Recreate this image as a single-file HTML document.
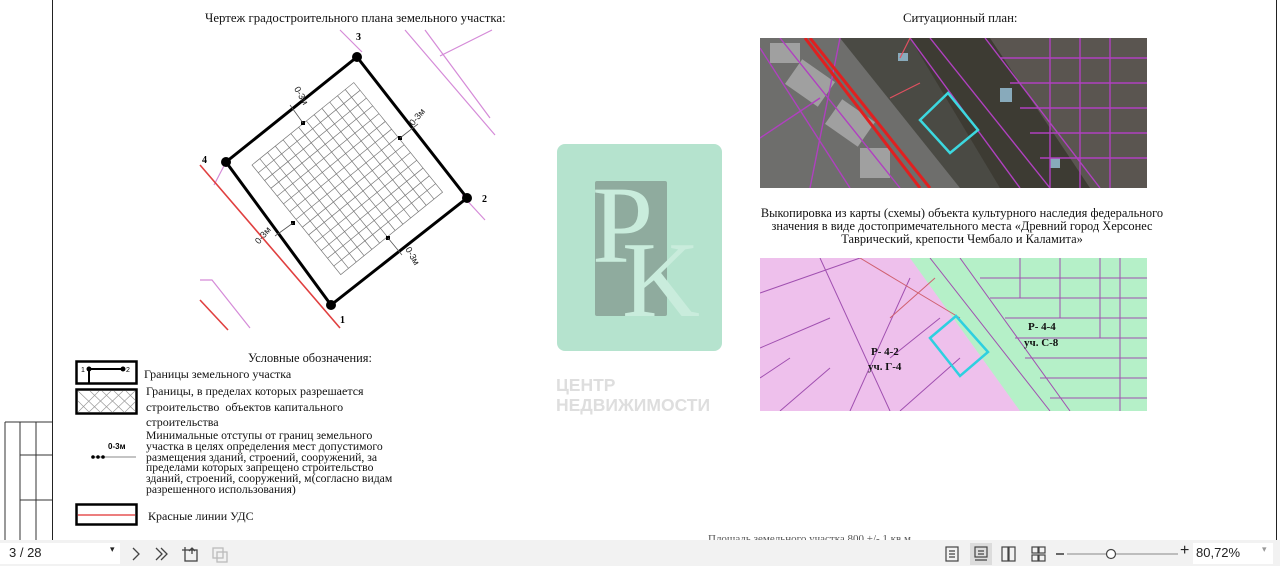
<!DOCTYPE html>
<html><head><meta charset="utf-8"><style>
*{margin:0;padding:0;box-sizing:border-box}
body{width:1280px;height:566px;overflow:hidden;background:#fff;position:relative;font-family:"Liberation Serif",serif;color:#111}
.t{position:absolute;font-size:12px;line-height:14px;white-space:nowrap}
.tb{position:absolute;left:0;top:540px;width:1280px;height:26px;background:#f2f2f2;font-family:"Liberation Sans",sans-serif;font-size:13px;color:#222}
</style></head><body>
<div style="position:absolute;left:52px;top:0;width:1px;height:540px;background:#222"></div>
<div style="position:absolute;left:1276px;top:0;width:1px;height:540px;background:#222"></div>
<svg style="position:absolute;left:0;top:0" width="60" height="540">
<g stroke="#333" stroke-width="1" fill="none">
<path d="M5 422H52M5 422V540M20 422V540M36 422V540M20 455H52M20 500H52"/>
</g></svg>

<div class="t" style="left:205px;top:11px;font-size:12.8px">Чертеж градостроительного плана земельного участка:</div>
<div class="t" style="left:903px;top:11px;font-size:12.8px">Ситуационный план:</div>

<svg style="position:absolute;left:190px;top:20px" width="330" height="320" viewBox="190 20 330 320">
<g stroke="#d58bd8" stroke-width="1.2" fill="none">
<path d="M340 30L362 52M405 30L495 135M425 30L490 118M440 56L492 30M462 195L485 220M200 280H212L250 328M214 185L226 162"/>
</g>
<g stroke="#e04040" stroke-width="1.6" fill="none"><path d="M200 165L340 328M200 300L228 330"/></g>
<g transform="translate(252,165) rotate(-39)">
<g stroke="#777" stroke-width="0.7">
<path d="M0 0H131V141H0Z" fill="none"/>
<path d="M10 0V141M20 0V141M30 0V141M40 0V141M50 0V141M60 0V141M70 0V141M80 0V141M90 0V141M100 0V141M110 0V141M120 0V141M0 10H131M0 20H131M0 30H131M0 40H131M0 50H131M0 60H131M0 70H131M0 80H131M0 90H131M0 100H131M0 110H131M0 120H131M0 130H131"/>
</g></g>
<path d="M357 57L467 198L331 305L226 162Z" fill="none" stroke="#000" stroke-width="3"/>
<g fill="#000"><circle cx="357" cy="57" r="5"/><circle cx="467" cy="198" r="5"/><circle cx="331" cy="305" r="5"/><circle cx="226" cy="162" r="5"/>
<rect x="301" y="121" width="4" height="4"/><rect x="398" y="136" width="4" height="4"/><rect x="291" y="221" width="4" height="4"/><rect x="386" y="236" width="4" height="4"/></g>
<g stroke="#555" stroke-width="0.8"><path d="M303 123L290 105M400 138L418 124M293 223L275 236M388 238L402 255"/></g>
<g font-family="Liberation Sans,sans-serif" font-size="9" fill="#222">
<text x="284" y="90" transform="rotate(60 290 98)">0-3м</text>
<text x="408" y="125" transform="rotate(-50 412 120)">0-3м</text>
<text x="255" y="240" transform="rotate(-50 262 238)">0-3м</text>
<text x="400" y="252" transform="rotate(60 405 255)">0-3м</text>
</g>
<g font-family="Liberation Serif,serif" font-weight="bold" font-size="10" fill="#000">
<text x="356" y="40">3</text><text x="482" y="202">2</text><text x="340" y="323">1</text><text x="202" y="163">4</text></g>
</svg>

<svg style="position:absolute;left:557px;top:144px" width="166" height="208" viewBox="557 144 166 208">
<rect x="557" y="144" width="165" height="207" rx="8" fill="#b5e3ce"/>
<rect x="595" y="181" width="72" height="135" rx="2" fill="#8fab9e"/>
<text x="592" y="262" font-family="Liberation Serif,serif" font-size="110" fill="#c9ecdc">P</text>
<text x="622" y="316" font-family="Liberation Serif,serif" font-size="108" fill="#c9ecdc">K</text>
</svg>
<div style="position:absolute;left:556px;top:375px;font:bold 17.5px 'Liberation Sans',sans-serif;color:#dedede;line-height:20px">ЦЕНТР<br>НЕДВИЖИМОСТИ</div>

<svg style="position:absolute;left:760px;top:38px" width="387" height="150" viewBox="0 0 387 150">
<rect width="387" height="150" fill="#4a4a44"/>
<path d="M0 0H80L200 150H0Z" fill="#6e6e6c"/>
<path d="M150 0H230L330 150H240Z" fill="#3d3b33"/>
<path d="M230 0H387V150H330Z" fill="#5a5550"/>
<g fill="#a0a0a0"><rect x="30" y="30" width="40" height="30" transform="rotate(35 50 45)"/><rect x="70" y="70" width="40" height="30" transform="rotate(35 90 85)"/><rect x="100" y="110" width="30" height="30"/><rect x="10" y="5" width="30" height="20"/></g>
<g fill="#8ab"><rect x="138" y="15" width="10" height="8"/><rect x="240" y="50" width="12" height="14"/><rect x="290" y="120" width="10" height="10"/></g>
<g stroke="#b040c0" stroke-width="1.4" fill="none">
<path d="M0 10L90 150M20 0L140 150M150 0L260 150M170 0L290 150M225 0L340 150M240 20H387M250 45H387M260 70H387M270 95H387M280 120H387M290 0V150M320 0V150M350 0V150M80 0L50 150M0 100L60 60"/>
</g>
<g stroke="#e02020" stroke-width="3" fill="none"><path d="M45 0L160 150M50 0L170 150"/></g>
<path d="M160 45L130 60M140 20L150 0" stroke="#e05060" stroke-width="1.2" fill="none"/>
<path d="M160 82L188 55L218 92L190 115Z" fill="none" stroke="#3cd8e0" stroke-width="2.5"/>
</svg>

<div class="t" style="left:744px;top:207px;width:436px;text-align:center;white-space:normal;line-height:13px;font-size:12.4px">Выкопировка из карты (схемы) объекта культурного наследия федерального значения в виде достопримечательного места «Древний город Херсонес Таврический, крепости Чембало и Каламита»</div>

<svg style="position:absolute;left:760px;top:258px" width="387" height="153" viewBox="0 0 387 153">
<rect width="387" height="153" fill="#eec0ec"/>
<path d="M150 0H387V153H260Z" fill="#b5f0c8"/>
<g stroke="#a050b0" stroke-width="1" fill="none">
<path d="M0 35L100 0M60 0L130 153M0 90L70 60M20 153L70 110M150 20L90 153M180 60L130 100M200 100L140 153M0 120L30 100"/>
<path d="M170 0L290 153M200 0L310 153M220 20H387M230 40H387M245 60H387M255 80H387M265 100H387M280 120H387M290 140H387M260 0V40M300 0V60M340 0V80M360 0V153"/>
</g>
<path d="M100 0L200 60M130 60L175 20" stroke="#d06070" stroke-width="1" fill="none"/>
<path d="M170 80L196 58L228 94L200 118Z" fill="none" stroke="#2ed0e0" stroke-width="2.5"/>
<g font-family="Liberation Serif,serif" font-weight="bold" font-size="11" fill="#111">
<text x="111" y="97">Р- 4-2</text><text x="108" y="112">уч. Г-4</text>
<text x="268" y="72">Р- 4-4</text><text x="264" y="88">уч. С-8</text></g>
</svg>

<div class="t" style="left:248px;top:351px;font-size:12.4px">Условные обозначения:</div>
<svg style="position:absolute;left:75px;top:360px" width="65" height="170">
<rect x="1.5" y="1.5" width="60" height="22" fill="#fff" stroke="#000" stroke-width="2.5"/>
<path d="M14 9H48M14 9V23" stroke="#000" stroke-width="2" fill="none"/>
<circle cx="14" cy="9" r="2.5"/><circle cx="48" cy="9" r="2.5"/>
<text x="6" y="12" font-size="7" font-family="Liberation Sans">1</text><text x="51" y="12" font-size="7" font-family="Liberation Sans">2</text>
<rect x="1.5" y="29.5" width="60" height="24" fill="#fff" stroke="#000" stroke-width="2.5"/>
<path d="M3 31L25 52M15 31L37 52M27 31L49 52M39 31L60 51M51 31L60 40M3 41L14 52M3 52L24 31M14 52L36 31M26 52L48 31M38 52L60 31M50 52L60 42" stroke="#999" stroke-width="0.7"/>
<text x="33" y="89" font-size="8" font-weight="bold" font-family="Liberation Sans">0-3м</text>
<path d="M17 97H61" stroke="#888"/><circle cx="18" cy="97" r="1.8"/><circle cx="23" cy="97" r="1.8"/><circle cx="28" cy="97" r="1.8"/>
<rect x="1.5" y="144.5" width="60" height="20" fill="#fff" stroke="#000" stroke-width="2.5"/>
<path d="M3 155H60" stroke="#e03030" stroke-width="1.2"/>
</svg>
<div class="t" style="left:144px;top:367px;font-size:12px">Границы земельного участка</div>
<div class="t" style="left:146px;top:384px;font-size:12px;line-height:15.5px">Границы, в пределах которых разрешается<br>строительство&nbsp; объектов капитального<br>строительства</div>
<div class="t" style="left:146px;top:431px;font-size:11.7px;line-height:10.8px">Минимальные отступы от границ земельного<br>участка в целях определения мест допустимого<br>размещения зданий, строений, сооружений, за<br>пределами которых запрещено строительство<br>зданий, строений, сооружений, м(согласно видам<br>разрешенного использования)</div>
<div class="t" style="left:148px;top:509px;font-size:12px">Красные линии УДС</div>
<div class="t" style="left:708px;top:532px;font-size:11px;color:#555">Площадь земельного участка 800 +/- 1 кв.м.</div>

<div class="tb">
<div style="position:absolute;left:0;top:3px;width:120px;height:21px;background:#fff"></div>
<div style="position:absolute;left:9px;top:5px">3 / 28</div>
<div style="position:absolute;left:110px;top:4px;font-size:9px">▾</div>
<svg style="position:absolute;left:128px;top:5px" width="110" height="18" fill="none" stroke="#444" stroke-width="1.3">
<path d="M5 3L11 9L5 15"/><path d="M28 3L34 9L28 15M33 3L39 9L33 15"/>
<rect x="57" y="5" width="12" height="11"/><path d="M57 2V5H54M64 9V3M61 6L64 3L67 6"/>
<g stroke="#bbb"><rect x="85" y="3" width="10" height="10"/><rect x="89" y="7" width="10" height="10"/></g>
</svg>
<svg style="position:absolute;left:940px;top:3px" width="240" height="22" fill="none" stroke="#444" stroke-width="1.2">
<rect x="6" y="4" width="12" height="14"/><path d="M9 8H15M9 11H15M9 14H15"/>
<rect x="30" y="0" width="22" height="22" fill="#dcdcdc" stroke="none"/>
<rect x="35" y="4" width="12" height="10"/><path d="M35 17H47M38 8H44M38 11H44"/>
<rect x="62" y="4" width="6" height="14"/><rect x="69" y="4" width="6" height="14"/>
<rect x="92" y="4" width="6" height="6"/><rect x="99" y="4" width="6" height="6"/><rect x="92" y="12" width="6" height="6"/><rect x="99" y="12" width="6" height="6"/>
<path d="M116 11H124" stroke-width="1.6"/><path d="M127 11H238" stroke="#888" stroke-width="1"/>
<circle cx="171" cy="11" r="4.5" fill="#fff"/>
</svg>
<div style="position:absolute;left:1180px;top:2px;font-size:16px">+</div>
<div style="position:absolute;left:1193px;top:3px;width:80px;height:21px;background:#fff"></div>
<div style="position:absolute;left:1196px;top:5px">80,72%</div>
<div style="position:absolute;left:1262px;top:4px;font-size:9px;color:#999">▾</div>
</div>
</body></html>
